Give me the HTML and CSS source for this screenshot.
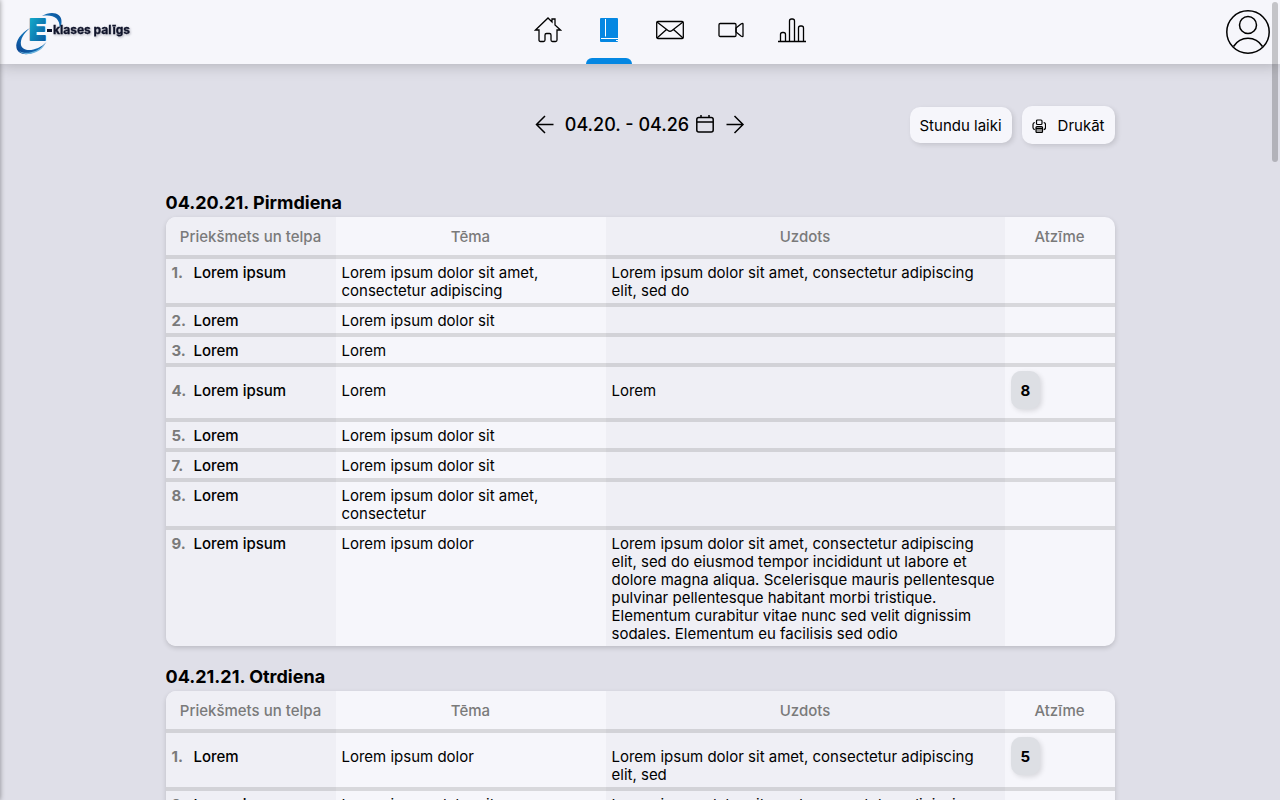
FILE: index.html
```html
<!DOCTYPE html>
<html lang="lv">
<head>
<meta charset="utf-8">
<meta name="viewport" content="width=device-width, initial-scale=1">
<title>E-klases palīgs</title>
<link rel="stylesheet" href="styles.css">
</head>
<body>
<header class="topbar">
  <a class="logo" href="#" aria-label="E-klases palīgs">
    <svg width="120" height="48" viewBox="0 0 120 48">
      <defs>
        <linearGradient id="swoosh" x1="0" y1="1" x2="1" y2="0"><stop offset="0" stop-color="#0a3f8c"/><stop offset=".5" stop-color="#1272b8"/><stop offset="1" stop-color="#0a4a94"/></linearGradient>
        <linearGradient id="letter" x1="0" y1="0" x2="1" y2="1"><stop offset="0" stop-color="#12b5cf"/><stop offset="1" stop-color="#0c4f9c"/></linearGradient>
      </defs>
      <path d="M15 19C6 24 0 32 1.500 39c2 9 19 9 30-6C23 42 8 44 6 36c-1-6 3-12 9-17z" fill="url(#swoosh)"/>
      <path d="M4 42c6 6 19 3 26-6-8 7-19 10-26 6z" fill="#6cb4de"/>
      <path d="M27 7c8-5 20-4 19.500 6 0 3-1 5-2 6 1-10-7-14-17.500-12z" fill="url(#swoosh)"/>
      <text class="logo-letter" x="14" y="31" fill="url(#letter)" stroke="url(#letter)" stroke-width="2" stroke-linejoin="round">E</text>
      <rect x="32" y="20" width="5" height="3" fill="#10142b"/>
      <text class="logo-name" x="38" y="25">klases palīgs</text>
    </svg>
  </a>
  <nav class="nav" aria-label="Galvenā izvēlne">
    <a class="nav-item" href="#" aria-label="Sākums">
      <svg width="28" height="28" viewBox="0 0 28 28"><path d="M1.500 14 14 2l4 4V3h3v6l5.500 5H23v10q0 1.500-1.500 1.500h-3Q17 25.500 17 24v-5q0-1.500-1.500-1.500h-3Q11 17.500 11 19v5q0 1.500-1.500 1.500h-3Q5 25.500 5 24V14z"/></svg>
    </a>
    <a class="nav-item active" href="#" aria-label="Dienasgrāmata" aria-current="page">
      <svg width="28" height="28" viewBox="0 0 28 28"><rect class="book" x="5" y="2" width="18" height="24" rx="1"/><path class="book-line" d="M10.500 3V20.500M6 22.500h17M21 24.500h2"/></svg>
    </a>
    <a class="nav-item" href="#" aria-label="Pasts">
      <svg width="28" height="28" viewBox="0 0 28 28"><rect x=".7" y="5.500" width="26.600" height="17" rx="1.200"/><path d="m1 6 11 8.500q2 1.500 4 0L27 6M1 22l9.500-8.500M27 22l-9.500-8.500"/></svg>
    </a>
    <a class="nav-item" href="#" aria-label="Video">
      <svg width="28" height="28" viewBox="0 0 28 28"><rect x="2" y="7.500" width="17" height="13" rx="1.200"/><path d="m19 12 5-4q2-1.200 2 0v12q0 1.200-2 0l-5-4z"/></svg>
    </a>
    <a class="nav-item" href="#" aria-label="Statistika">
      <svg width="28" height="28" viewBox="0 0 28 28"><path d="M0 25.500h28M2.500 25.500v-7q0-2 2-2h1q2 0 2 2v7M11.500 25.500V5q0-2 2-2h1q2 0 2 2v20.500M20.500 25.500V12q0-2 2-2h1q2 0 2 2v13.500"/></svg>
    </a>
  </nav>
  <a class="profile" href="#" aria-label="Profils">
    <svg width="44" height="44" viewBox="0 0 44 44"><circle cx="22" cy="22" r="21.200"/><circle cx="22" cy="15" r="8.500"/><path d="M7.500 36.500c7-11 22-11 29 0"/></svg>
  </a>
</header>

<aside class="drawer"></aside>
<div class="scroll-thumb"></div>

<main class="page">
  <div class="toolbar">
    <div class="week">
      <button class="plain" type="button" aria-label="Iepriekšējā nedēļa"><svg width="20" height="20" viewBox="0 0 20 20"><path d="M18.500 9.500H2M10 1 1.500 9.500l8.500 8.500"/></svg></button>
      <button class="plain range" type="button">04.20. - 04.26
        <svg width="20" height="20" viewBox="0 0 20 20"><rect x="1.800" y="2.500" width="16.400" height="14.500" rx="2"/><path d="M2 7h16M6 0v3M14 0v3"/></svg>
      </button>
      <button class="plain" type="button" aria-label="Nākamā nedēļa"><svg width="20" height="20" viewBox="0 0 20 20"><path d="M1.500 9.500H18M9.500 1l8.500 8.500L9.500 18"/></svg></button>
    </div>
    <div class="actions">
      <button class="button" type="button">Stundu laiki</button>
      <button class="button print" type="button">
        <svg width="14" height="14" viewBox="0 0 14 14"><rect x="4.500" y="1" width="5.500" height="4.500" rx="1"/><path d="M2.800 3.500Q1 3.800 1 5.500v3q0 1.800 1.800 2.200M11.700 3.500q1.800.3 1.800 2v3q0 1.800-1.800 2.200"/><rect class="paper" x="4" y="7.500" width="6.500" height="6" rx="1"/><path d="M4 9.500h6.500"/></svg>
        Drukāt
      </button>
    </div>
  </div>

  <section class="day">
    <h2>04.20.21. Pirmdiena</h2>
    <table>
      <thead><tr><th class="subject">Priekšmets un telpa</th><th class="topic">Tēma</th><th>Uzdots</th><th class="mark">Atzīme</th></tr></thead>
      <tbody>
        <tr><td><span class="num">1.</span><b>Lorem ipsum</b></td><td>Lorem ipsum dolor sit amet, consectetur adipiscing</td><td>Lorem ipsum dolor sit amet, consectetur adipiscing elit, sed do</td><td></td></tr>
        <tr><td><span class="num">2.</span><b>Lorem</b></td><td>Lorem ipsum dolor sit</td><td></td><td></td></tr>
        <tr><td><span class="num">3.</span><b>Lorem</b></td><td>Lorem</td><td></td><td></td></tr>
        <tr><td><span class="num">4.</span><b>Lorem ipsum</b></td><td>Lorem</td><td>Lorem</td><td><span class="grade">8</span></td></tr>
        <tr><td><span class="num">5.</span><b>Lorem</b></td><td>Lorem ipsum dolor sit</td><td></td><td></td></tr>
        <tr><td><span class="num">7.</span><b>Lorem</b></td><td>Lorem ipsum dolor sit</td><td></td><td></td></tr>
        <tr><td><span class="num">8.</span><b>Lorem</b></td><td>Lorem ipsum dolor sit amet, consectetur</td><td></td><td></td></tr>
        <tr><td><span class="num">9.</span><b>Lorem ipsum</b></td><td>Lorem ipsum dolor</td><td>Lorem ipsum dolor sit amet, consectetur adipiscing elit, sed do eiusmod tempor incididunt ut labore et dolore magna aliqua. Scelerisque mauris pellentesque pulvinar pellentesque habitant morbi tristique. Elementum curabitur vitae nunc sed velit dignissim sodales. Elementum eu facilisis sed odio</td><td></td></tr>
      </tbody>
    </table>
  </section>

  <section class="day">
    <h2>04.21.21. Otrdiena</h2>
    <table>
      <thead><tr><th class="subject">Priekšmets un telpa</th><th class="topic">Tēma</th><th>Uzdots</th><th class="mark">Atzīme</th></tr></thead>
      <tbody>
        <tr><td><span class="num">1.</span><b>Lorem</b></td><td>Lorem ipsum dolor</td><td>Lorem ipsum dolor sit amet, consectetur adipiscing elit, sed</td><td><span class="grade">5</span></td></tr>
        <tr><td><span class="num">2.</span><b>Lorem ipsum</b></td><td>Lorem ipsum dolor sit</td><td>Lorem ipsum dolor sit amet, consectetur adipiscing</td><td></td></tr>
      </tbody>
    </table>
  </section>
</main>
</body>
</html>
```

FILE: styles.css
```css
* { box-sizing: border-box; }

html { scrollbar-width: none; }

body {
  margin: 0;
  background: #dfdfe8;
  color: #000;
  font: 15px/18px Inter, sans-serif;
}

button { font: inherit; color: inherit; border: 0; cursor: pointer; }

svg { display: block; fill: none; stroke: #000; }

.topbar {
  position: sticky;
  top: 0;
  z-index: 2;
  display: grid;
  grid-template-columns: 1fr auto 1fr;
  height: 64px;
  padding: 0 10px 0 15px;
  background: #f6f6fb;
  box-shadow: 0 0 15px rgba(0, 0, 0, .25);
}

.logo { padding-top: 9px; }
.logo svg { stroke: none; overflow: visible; }
.logo-letter { font: 800 28px Inter, sans-serif; }
.logo-name {
  font: 700 12px Inter, sans-serif;
  fill: #10142b;
  stroke: #10142b;
  stroke-width: .3;
  filter: drop-shadow(1px 1px 1px rgba(16, 20, 43, .3));
}

.nav { display: flex; gap: 15px; padding-left: 54px; }
.nav-item {
  display: flex;
  flex-direction: column;
  justify-content: space-between;
  align-items: center;
  width: 46px;
  padding-top: 16px;
}
.nav-item svg { stroke-width: 1.3; }
.nav-item.active::after {
  content: "";
  width: 100%;
  height: 6px;
  border-radius: 6px 6px 0 0;
  background: #0487e2;
}
.nav-item .book { fill: #0487e2; stroke: none; }
.nav-item .book-line { stroke: #fff; stroke-width: 1; }

.profile { justify-self: end; align-self: center; }
.profile svg { stroke-width: 1.5; }

.drawer {
  position: fixed;
  z-index: 3;
  top: 0;
  bottom: 0;
  left: -200px;
  width: 200px;
  box-shadow: 0 0 5px rgba(0, 0, 0, .4);
}

.scroll-thumb {
  position: fixed;
  z-index: 4;
  top: 2px;
  right: 2px;
  width: 6px;
  height: 160px;
  border-radius: 3px;
  background: rgba(0, 0, 0, .2);
}

.page {
  max-width: 949px;
  margin: 0 auto;
  padding-top: 42px;
}

.toolbar {
  display: grid;
  grid-template-columns: 1fr auto 1fr;
  align-items: center;
  height: 38px;
  margin-bottom: 48px;
}
.week { grid-column: 2; display: flex; align-items: center; gap: 10px; }
.plain { padding: 0; background: none; }
.range { display: flex; align-items: center; gap: 6px; font-size: 18px; font-weight: 500; line-height: 22px; }
.week svg { stroke-width: 1.5; }
.actions { display: flex; align-items: center; justify-content: flex-end; gap: 10px; }
.button {
  height: 36px;
  padding: 2px 10px 0;
  border-radius: 10px;
  background: #f6f6fb;
  box-shadow: 2px 2px 5px rgba(0, 0, 0, .12);
}
.print { display: flex; align-items: center; gap: 12px; height: 38px; }
.print svg { stroke-width: 1.2; }
.paper { fill: #999; }

.day { margin-bottom: 20px; }
.day h2 { margin: 0; padding-bottom: 3px; font-size: 18px; font-weight: 700; line-height: 22px; }

table {
  width: 100%;
  table-layout: fixed;
  border-spacing: 0;
  border-radius: 10px;
  overflow: hidden;
  background: #f6f6fb;
  box-shadow: 0 2px 5px rgba(0, 0, 0, .16);
}
.subject { width: 170px; }
.topic { width: 270px; }
.mark { width: 110px; }
th { height: 38px; padding: 2px 0 0; color: #7a7a7a; font-weight: 500; }
td { padding: 5px 6px 3px; border-top: 4px solid rgba(0, 0, 0, .12); vertical-align: baseline; }
th:nth-child(odd), td:nth-child(odd) { background: #efeff5; }
b { font-weight: 500; }
.num { display: inline-block; width: 22px; color: #7a7a7a; font-weight: 700; }
.grade {
  display: inline-block;
  margin: -1px 0 6px;
  padding: 11px 10px 9px;
  border-radius: 10px;
  background: #dddfe4;
  box-shadow: 2px 2px 5px rgba(0, 0, 0, .12);
  font-weight: 700;
}
```
